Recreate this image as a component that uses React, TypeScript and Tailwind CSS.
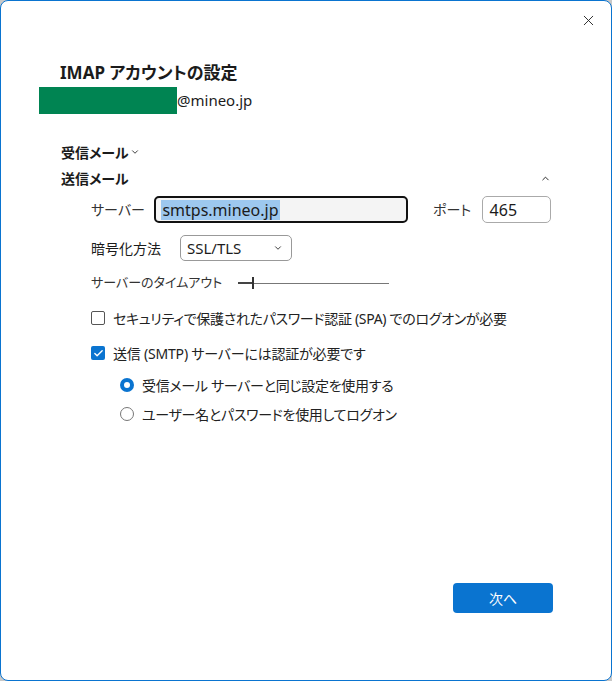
import { ChevronDown, ChevronUp, X, Check } from 'lucide-react';

const font = { fontFamily: '"Noto Sans", "Noto Sans CJK JP", sans-serif' };

export default function App() {
  return (
    <div className="w-[612px] h-[681px] bg-[#c8c8c8] [font-feature-settings:'palt']" style={font}>
      <div className="relative w-full h-full bg-white border border-[#0a74d0] rounded-[8px] text-[#1b1b1b] flex flex-col">
        <button className="absolute right-[14px] top-[11px] text-[#222]">
          <X className="w-[17px] h-[17px]" strokeWidth={1.3} />
        </button>

        <div className="pl-[59px] pt-[60px]">
          <h1 className="text-[17px] font-bold leading-[24px]">IMAP アカウントの設定</h1>
        </div>
        <div className="flex items-center pl-[38px] mt-[2px] h-[27px]">
          <div className="w-[138px] h-[27px] bg-[#008452]" />
          <span className="text-[15px] leading-none">@mineo.jp</span>
        </div>

        <div className="pl-[60px] pr-[60px] mt-[28px]">
          <div className="flex items-center h-[20px] text-[14px] font-bold">
            受信メール
            <ChevronDown className="w-[10px] h-[10px] ml-[1px]" strokeWidth={2} />
          </div>
          <div className="flex items-center justify-between h-[20px] mt-[6px] text-[14px] font-bold">
            <span>送信メール</span>
            <ChevronUp className="w-[11px] h-[11px]" strokeWidth={2} />
          </div>

          <div className="pl-[30px] mt-[8px] text-[14px]">
            <div className="flex items-center h-[27px]">
              <span className="w-[64px] text-[#333]">サーバー</span>
              <div className="w-[256px] h-[27px] border-2 border-[#111] rounded-[5px] bg-[#f4f4f4] flex items-center pl-[5px]">
                <span className="bg-[#9dc8ef] px-[1px] leading-[20px] text-[16px]">smtps.mineo.jp</span>
              </div>
              <span className="ml-[25px] w-[49px] text-[#333]">ポート</span>
              <div className="w-[70px] h-[27px] border border-[#aaa] rounded-[5px] flex items-center pl-[7px] text-[16px]">465</div>
            </div>

            <div className="flex items-center h-[26px] mt-[12px]">
              <span className="w-[89px]">暗号化方法</span>
              <div className="w-[112px] h-[26px] border border-[#999] rounded-[5px] flex items-center justify-between pl-[6px] pr-[8px] text-[15px]">
                SSL/TLS
                <ChevronDown className="w-[10px] h-[10px]" strokeWidth={2} />
              </div>
            </div>

            <div className="flex items-center h-[20px] mt-[12px]">
              <span className="w-[147px] text-[13px] text-[#333]">サーバーのタイムアウト</span>
              <div className="w-[151px] h-[12px] flex items-center">
                <div className="w-[14px] h-[2px] bg-[#444]" />
                <div className="w-[2px] h-[12px] bg-[#333]" />
                <div className="flex-1 h-[1px] bg-[#777]" />
              </div>
            </div>

            <div className="flex items-center h-[20px] mt-[15px]">
              <div className="w-[14px] h-[14px] border border-[#555] rounded-[2px] bg-white" />
              <span className="ml-[8px] text-[#222] tracking-[-0.3px]">セキュリティで保護されたパスワード認証 (SPA) でのログオンが必要</span>
            </div>

            <div className="flex items-center h-[20px] mt-[15px]">
              <div className="w-[14px] h-[14px] rounded-[2px] bg-[#0a74d0] flex items-center justify-center">
                <Check className="w-[11px] h-[11px] text-white" strokeWidth={3} />
              </div>
              <span className="ml-[8px] text-[#222] tracking-[-0.2px]">送信 (SMTP) サーバーには認証が必要です</span>
            </div>

            <div className="pl-[29px] mt-[12px] flex flex-col gap-[9px]">
              <div className="flex items-center h-[20px]">
                <div className="w-[14px] h-[14px] rounded-full bg-[#0a74d0] flex items-center justify-center">
                  <div className="w-[6px] h-[6px] rounded-full bg-white" />
                </div>
                <span className="ml-[8px] text-[#222] tracking-[-0.3px]">受信メール サーバーと同じ設定を使用する</span>
              </div>
              <div className="flex items-center h-[20px]">
                <div className="w-[14px] h-[14px] rounded-full border border-[#777] bg-white" />
                <span className="ml-[8px] text-[#222] tracking-[-0.3px]">ユーザー名とパスワードを使用してログオン</span>
              </div>
            </div>
          </div>
        </div>

        <div className="flex-1" />
        <div className="flex justify-end pr-[58px] pb-[67px]">
          <button className="w-[100px] h-[30px] bg-[#0a74d0] rounded-[4px] text-white text-[14px]">次へ</button>
        </div>
      </div>
    </div>
  );
}
